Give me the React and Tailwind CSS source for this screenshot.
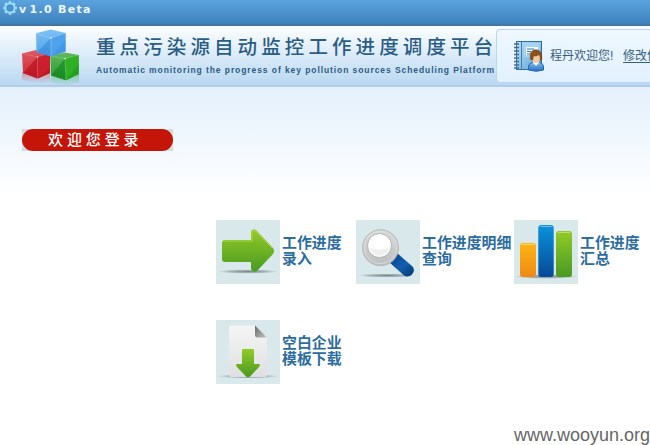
import React from "react";

function Gear() {
  return (
    <svg className="h-4 w-4 shrink-0" viewBox="0 0 16 16" fill="none">
      <g stroke="#a5dff8" strokeWidth="2.800">
        <path d="M8 1.200v13.600M1.200 8h13.600M3.200 3.200l9.600 9.600M12.800 3.200 3.200 12.800" />
      </g>
      <circle cx="8" cy="8" r="5.400" fill="#98dbf8" />
      <circle cx="8" cy="8" r="3.200" fill="#4a96d0" stroke="#2f87c0" strokeWidth=".7" />
    </svg>
  );
}

function Cubes() {
  return (
    <svg className="h-[60px] w-[64px] shrink-0" viewBox="0 0 64 60">
      <defs>
        <linearGradient id="redShade" x2="0" y2="1"><stop stopColor="#dd5a62" /><stop offset="1" stopColor="#d32433" /></linearGradient>
        <linearGradient id="greenShade" x2="0" y2="1"><stop stopColor="#62b85e" /><stop offset="1" stopColor="#209a28" /></linearGradient>
        <linearGradient id="blueShade" x2="0" y2="1"><stop stopColor="#7fc0f5" /><stop offset="1" stopColor="#4da2ec" /></linearGradient>
        <linearGradient id="redGlow" x2="0" y2="1"><stop stopColor="#e05060" stopOpacity=".5" /><stop offset="1" stopColor="#e05060" stopOpacity="0" /></linearGradient>
        <linearGradient id="greenGlow" x2="0" y2="1"><stop stopColor="#40b050" stopOpacity=".5" /><stop offset="1" stopColor="#40b050" stopOpacity="0" /></linearGradient>
      </defs>
      <path d="M2 46 18 51 30 46V55L18 58 2 54Z" fill="url(#redGlow)" />
      <path d="M31 48 46 54 59 47V56L46 60 31 56Z" fill="url(#greenGlow)" />
      <path d="M2 27.500 16 24 30 27V47L17.500 52.500 3 47Z" fill="url(#redShade)" />
      <path d="M17.500 31 30 27V47L17.500 52.500Z" fill="#cc1f2d" />
      <path d="M3 47 17.500 31V52.500Z" fill="#b00f1e" opacity=".65" />
      <path d="M17.500 52.500 30 42V47Z" fill="#a80d1b" opacity=".4" />
      <path d="M2 27.500 17.500 31V52.500M17.500 31 30 27" fill="none" stroke="#f0a0a5" strokeWidth=".6" opacity=".5" />
      <path d="M30.300 30 45 26.500 58.700 29V48L46 54.300 31 49.500Z" fill="url(#greenShade)" />
      <path d="M45 32.500 58.700 29V48L46 54.300Z" fill="#2db023" />
      <path d="M31 49.500 45 32.500 46 54.300Z" fill="#0e7d1b" opacity=".55" />
      <path d="M46 54.300 58.700 38V48Z" fill="#148a18" opacity=".4" />
      <path d="M30.300 30 45 32.500 46 54.300M45 32.500 58.700 29" fill="none" stroke="#a8eb96" strokeWidth=".6" opacity=".6" />
      <path d="M16 7.300 31 3.500 45.500 7V25.500L31 30.500 16.500 26.500Z" fill="url(#blueShade)" />
      <path d="M31 12 45.500 7V25.500L31 30.500Z" fill="#4ea2ec" />
      <path d="M16.500 26.500 31 12V30.500Z" fill="#2f80d4" opacity=".5" />
      <path d="M31 30.500 45.500 14V25.500Z" fill="#2f80d4" opacity=".3" />
      <path d="M16 7.300 31 12V30.500M31 12 45.500 7" fill="none" stroke="#c4e7ff" strokeWidth=".6" opacity=".55" />
      <g fill="#fff" opacity=".9"><circle cx="31" cy="12" r=".8" /><circle cx="17.500" cy="31" r=".7" /><circle cx="45" cy="32.500" r=".8" /></g>
    </svg>
  );
}

function UserBook() {
  return (
    <svg className="h-8 w-8 shrink-0" viewBox="0 0 32 32">
      <defs>
        <linearGradient id="cover" x2="1" y2="1"><stop stopColor="#b8def5" /><stop offset="1" stopColor="#5fa6d5" /></linearGradient>
        <linearGradient id="shirt" x2="0" y2="1"><stop stopColor="#83c3f5" /><stop offset="1" stopColor="#286fc0" /></linearGradient>
      </defs>
      <rect x="3.500" y="1.500" width="25" height="28" fill="url(#cover)" stroke="#2c6fa5" />
      <path d="M8.500 2v27" stroke="#3d80b2" />
      <path d="M11 3h16v14H11z" fill="#a7d4f1" />
      <path d="M13 7h12v8H13z" fill="#eef8ff" />
      <path d="M14 9h7M14 11.500h4M14 14h3" stroke="#397bac" />
      <path d="M1 4h5M1 7.500h5M1 11h5M1 14.500h5M1 18h5M1 21.500h5M1 25h5M1 28h5" stroke="#466c88" strokeWidth="1.4" />
      <path d="M15.500 30V26q1-3.500 5-4h5q4 .5 5 4v4q-7 2.500-15 0Z" fill="url(#shirt)" stroke="#2465ae" />
      <path d="m19.500 22 3.500 4 3.500-4Z" fill="#fff" />
      <ellipse cx="23" cy="17.500" rx="4.300" ry="5.700" fill="#f6c99b" />
      <path d="M17.600 19.500q-2-8.500 4.400-9.800 7.500-.5 6.800 9.800l-1.500 1q.2-4-1-6-3 2-6 1.500l-.5 4Z" fill="#8c511c" stroke="#693b13" strokeWidth=".5" />
    </svg>
  );
}

function Tile({ children }) {
  return (
    <svg className="h-16 w-16 shrink-0 bg-[#d9e9eb]" viewBox="0 0 64 64">
      <defs>
        <linearGradient id="lime" x2="0" y2="1"><stop stopColor="#93ca27" /><stop offset="1" stopColor="#499a22" /></linearGradient>
        <linearGradient id="orange" x2="0" y2="1"><stop stopColor="#ffb515" /><stop offset="1" stopColor="#ed8814" /></linearGradient>
        <linearGradient id="azure" x2="0" y2="1"><stop stopColor="#0a94dc" /><stop offset="1" stopColor="#064998" /></linearGradient>
        <linearGradient id="handle" x1="0" x2="1" y2="1"><stop stopColor="#073b85" /><stop offset=".55" stopColor="#1260b0" /><stop offset="1" stopColor="#04366f" /></linearGradient>
        <linearGradient id="ring" x2="0" y2="1"><stop stopColor="#d9d9d9" /><stop offset="1" stopColor="#bcbfc0" /></linearGradient>
        <linearGradient id="paper" x2="0" y2="1"><stop stopColor="#f5f5f5" /><stop offset="1" stopColor="#dedfe0" /></linearGradient>
        <linearGradient id="fold" x2="1" y2="1"><stop stopColor="#666" /><stop offset="1" stopColor="#c5c5c5" /></linearGradient>
        <radialGradient id="floor"><stop stopColor="#6f7b7d" stopOpacity=".9" /><stop offset=".6" stopColor="#859194" stopOpacity=".6" /><stop offset="1" stopColor="#a0b0b2" stopOpacity="0" /></radialGradient>
      </defs>
      {children}
    </svg>
  );
}

function ArrowIcon() {
  return (
    <Tile>
      <ellipse cx="32" cy="51.500" rx="31" ry="2.200" fill="url(#floor)" />
      <path d="M9 20H35V12Q36 8 40 10L57 28Q59 31 57 34L41 51Q36 53.500 35 48V42H9Q6 42 6 39V23Q6 20 9 20Z" fill="url(#lime)" />
      <path d="M8 21H36V13Q37 10 39.500 11L56 28" fill="none" stroke="#b3dc54" strokeWidth=".8" />
    </Tile>
  );
}

function SearchIcon() {
  return (
    <Tile>
      <ellipse cx="31" cy="55.500" rx="30" ry="2" fill="url(#floor)" />
      <path d="m33 41 8-8 15.500 13.500q3 4-.5 8-4 3.500-8 1L33 42Z" fill="url(#handle)" />
      <circle cx="24.500" cy="27.700" r="18" fill="url(#ring)" stroke="#b5b8b9" />
      <circle cx="24.500" cy="27.500" r="16.200" fill="none" stroke="#dfdfdf" strokeWidth=".8" />
      <circle cx="23.500" cy="25.500" r="12" fill="#fff" stroke="#a5a5a5" strokeWidth=".8" />
      <path d="M14 27.500a9.600 9.600 0 0 0 19 0q-9 4-19 0" fill="#f0f0f0" />
    </Tile>
  );
}

function BarsIcon() {
  return (
    <Tile>
      <ellipse cx="32" cy="56.500" rx="33" ry="2.400" fill="url(#floor)" />
      <rect x="6" y="23" width="16" height="34" rx="3" fill="url(#orange)" />
      <rect x="24.300" y="5" width="15.400" height="52" rx="3" fill="url(#azure)" />
      <rect x="42" y="11" width="16" height="46" rx="3" fill="url(#lime)" />
      <path d="M8 24.500h12M26.500 6.500h11M44 12.500h12" stroke="#fff" strokeOpacity=".4" />
    </Tile>
  );
}

function DownloadIcon() {
  return (
    <Tile>
      <ellipse cx="32" cy="56.300" rx="31" ry="2.200" fill="url(#floor)" />
      <path d="M15 5.500H39L51 17.500V55Q51 57 49 57H15Q13 57 13 55V8Q13 5.500 15 5.500Z" fill="url(#paper)" />
      <path d="M39 5.500 51 17.500H41Q39 17.500 39 15.500Z" fill="url(#fold)" />
      <path d="M27 29H37Q38 29 38 30V44H43Q45 45 43 47L34 56.500Q32 58 30 56.500L21 47Q19 45 21 44H26V30Q26 29 27 29Z" fill="url(#lime)" />
    </Tile>
  );
}

function Entry({ icon, lines, width }) {
  return (
    <div className={`flex shrink-0 items-center gap-[2px] ${width}`}>
      {icon}
      <div className="pb-[2px] text-[14.900px] leading-4 font-bold whitespace-nowrap text-[#2c6d9f]">
        {lines.map((line) => <div key={line}>{line}</div>)}
      </div>
    </div>
  );
}

export default function App() {
  return (
    <div className="flex h-[445px] w-[650px] flex-col overflow-hidden bg-white font-['Liberation_Sans','Noto_Sans_CJK_SC',sans-serif]">
      <div className="flex h-[26px] shrink-0 items-start border-b-2 border-[#4676a8] bg-linear-to-b from-[#5ba3df] to-[#3e82bb] pl-[2px]">
        <Gear />
        <span className="ml-[1px] flex gap-[2px] font-['DejaVu_Sans',sans-serif] text-[11px] leading-[19px] font-bold tracking-[1.300px] whitespace-pre text-[#eef7fd]"><span>v</span><span>1.0 Beta</span></span>
      </div>
      <header className="flex h-[61px] shrink-0 border-b-2 border-[#b1cde8] bg-linear-to-b from-[#fcfeff] to-[#b9d8f2] pl-5">
        <Cubes />
        <div className="ml-3 w-[400px] shrink-0 pt-[7px] whitespace-nowrap text-[#2a5d85]">
          <h1 className="text-[19.500px] leading-[28px] font-medium tracking-[4.100px]">重点污染源自动监控工作进度调度平台</h1>
          <p className="mt-[3px] text-[8.500px] leading-3 font-bold tracking-[0.920px]">Automatic monitoring the progress of key pollution sources Scheduling Platform</p>
        </div>
        <div className="mt-[3px] flex h-[54px] w-[154px] shrink-0 items-center rounded-l border border-r-0 border-[#b9d7ed] bg-linear-to-b from-[#eef7fe] to-[#e2f1fd] pl-4 text-[12px] whitespace-nowrap text-[#34617e]">
          <UserBook />
          <span className="ml-[5px] w-[73px] shrink-0">程丹欢迎您!</span>
          <a className="w-[27px] shrink-0 overflow-hidden underline underline-offset-2">修改信息</a>
        </div>
      </header>
      <main className="relative flex-1 bg-[linear-gradient(#e4f0fc_0px,#ffffff_110px)] pt-[42px]">
        <div className="ml-[22px] h-[22px] w-[151px] bg-[#d5dce0]">
          <div className="h-full rounded-full bg-[#c51408] pl-[26px] text-[15px] leading-[21px] font-medium tracking-[3.900px] text-white">欢迎您登录</div>
        </div>
        <div className="mt-[69px] ml-[216px] flex flex-col gap-9">
          <div className="flex">
            <Entry icon={<ArrowIcon />} lines={["工作进度", "录入"]} width="w-[140px]" />
            <Entry icon={<SearchIcon />} lines={["工作进度明细", "查询"]} width="w-[158px]" />
            <Entry icon={<BarsIcon />} lines={["工作进度", "汇总"]} width="w-[136px]" />
          </div>
          <Entry icon={<DownloadIcon />} lines={["空白企业", "模板下载"]} width="w-[140px]" />
        </div>
        <div className="absolute right-0 bottom-0 text-[18px] leading-[20px] text-[#666]">www.wooyun.org</div>
      </main>
    </div>
  );
}
